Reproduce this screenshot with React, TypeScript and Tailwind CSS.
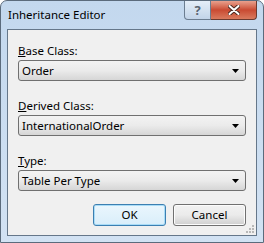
const fields = [
  { key: "B", rest: "ase Class:", value: "Order" },
  { key: "D", rest: "erived Class:", value: "InternationalOrder" },
  { key: "T", rest: "ype:", value: "Table Per Type" },
];

function Combo({ value }: { value: string }) {
  return (
    <div className="flex h-[21px] items-center justify-between rounded-[3px] border border-[#707070] bg-gradient-to-b from-[#f3f3f3] via-[#ebebeb] to-[#d6d6d6] pl-[3px] pr-[6px] text-[11.5px] text-black">
      <span>{value}</span>
      <svg width="7" height="4" viewBox="0 0 7 4">
        <path d="M0 0h7L3.5 4z" fill="#000" />
      </svg>
    </div>
  );
}

function Button({ label, focused }: { label: string; focused?: boolean }) {
  return (
    <button
      className={`h-[22px] w-[73px] rounded-[3px] border text-[11.5px] text-black ${
        focused
          ? "border-[#3c7fb1] bg-gradient-to-b from-[#eaf6fd] to-[#d9eefa] shadow-[inset_0_0_0_1px_#a9dcf7]"
          : "border-[#707070] bg-gradient-to-b from-[#f2f2f2] via-[#ebebeb] to-[#cfcfcf] shadow-[inset_0_0_0_1px_#fcfcfc]"
      }`}
    >
      {label}
    </button>
  );
}

export default function App() {
  return (
    <div
      className="flex h-[243px] w-[264px] flex-col rounded-t-[7px] border border-[#5b6b7c] bg-gradient-to-b from-[#c3d8ee] to-[#d2e2f3]"
      style={{ fontFamily: '"Noto Sans", "Open Sans", sans-serif' }}
    >
      <div className="flex h-[28px] items-start justify-between">
        <span className="pl-[7px] pt-[6px] text-[11.5px] leading-[15px] text-black">
          Inheritance Editor
        </span>
        <div className="mr-[6px] flex">
          <div className="flex h-[19px] w-[27px] items-center justify-center rounded-bl-[4px] border border-t-0 border-[#6b7d90] bg-gradient-to-b from-[#e4eef8] to-[#c2d4e8] text-[13px] font-bold leading-none text-[#5a6470]">
            ?
          </div>
          <div className="flex h-[19px] w-[46px] items-center justify-center rounded-br-[4px] border border-l-0 border-t-0 border-[#6b3a30] bg-gradient-to-b from-[#e8a08d] via-[#c94a32] to-[#d97a5e]">
            <svg width="12" height="10" viewBox="0 0 12 10">
              <path
                d="M1.5 1l9 8M10.5 1l-9 8"
                stroke="#4a2a22"
                strokeWidth="4"
                strokeLinecap="round"
              />
              <path
                d="M1.5 1l9 8M10.5 1l-9 8"
                stroke="#fff"
                strokeWidth="2"
                strokeLinecap="round"
              />
            </svg>
          </div>
        </div>
      </div>
      <div className="relative mx-[6px] mb-[6px] flex flex-1 flex-col border border-[#65778a] bg-[#f0f0f0] px-[10px] pt-[13px]">
        {fields.map((f, i) => (
          <div key={f.key} className={i > 0 ? "mt-[17px]" : ""}>
            <div className="mb-[2px] text-[11.5px] leading-[15px] text-black">
              <span className="underline">{f.key}</span>
              {f.rest}
            </div>
            <Combo value={f.value} />
          </div>
        ))}
        <div className="mt-[13px] flex justify-end gap-[7px]">
          <Button label="OK" focused />
          <Button label="Cancel" />
        </div>
        <div className="absolute bottom-[2px] right-[2px] grid grid-cols-3 gap-[1px]">
          {[0, 0, 1, 0, 1, 1, 1, 1, 1].map((on, i) => (
            <span
              key={i}
              className={`h-[2px] w-[2px] ${on ? "bg-[#b8b8b8]" : ""}`}
            />
          ))}
        </div>
      </div>
    </div>
  );
}
